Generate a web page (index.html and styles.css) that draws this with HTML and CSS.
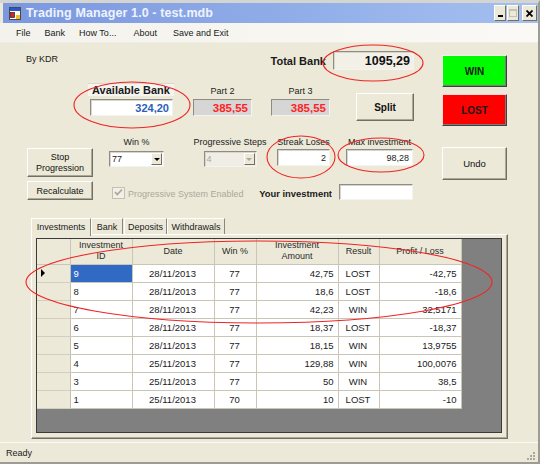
FILE: index.html
```html
<!DOCTYPE html>
<html>
<head>
<meta charset="utf-8">
<title>Trading Manager 1.0 - test.mdb</title>
<link rel="stylesheet" href="styles.css">
</head>
<body>
<div class="window">
  <div class="titlebar">
    <svg class="appicon" viewBox="0 0 12 13" width="12" height="13">
      <rect x="0.5" y="0.5" width="11" height="12" fill="#fff" stroke="#4a4a4a"/>
      <rect x="1" y="1" width="10" height="3" fill="#2858c8"/>
      <rect x="1.5" y="5.5" width="4" height="5" fill="#e02020" stroke="#222" stroke-width="0.7"/>
      <rect x="7" y="8" width="4" height="4" fill="#f4c020"/>
    </svg>
    <span class="title">Trading Manager 1.0 - test.mdb</span>
    <div class="capbtns">
      <span class="capbtn cap-min"><span class="minbar"></span></span>
      <span class="capbtn cap-max"><span class="maxbox"></span></span>
      <span class="capbtn cap-close">
        <svg viewBox="0 0 7 7" width="7" height="7"><path d="M0.5 0.5 L6.5 6.5 M6.5 0.5 L0.5 6.5" stroke="#000" stroke-width="1.8"/></svg>
      </span>
    </div>
  </div>
  <div class="menubar">
    <span class="mi">File</span>
    <span class="mi">Bank</span>
    <span class="mi">How To...</span>
    <span class="mi mi-about">About</span>
    <span class="mi mi-save">Save and Exit</span>
  </div>
  <div class="client">
    <div class="top">
      <div class="leftcol">
        <div class="row1">
          <span class="bykdr">By KDR</span>
          <div class="totalgrp">
            <span class="blabel">Total Bank</span>
            <div class="box total">1095,29</div>
          </div>
        </div>
        <div class="row2">
          <div class="availgrp">
            <div class="availlabel">Available Bank</div>
            <div class="box avail">324,20</div>
          </div>
          <div class="partgrp">
            <div class="partlabel">Part 2</div>
            <div class="box part">385,55</div>
          </div>
          <div class="partgrp">
            <div class="partlabel">Part 3</div>
            <div class="box part">385,55</div>
          </div>
          <div class="btn split">Split</div>
        </div>
        <div class="row3">
          <div class="btncol">
            <div class="btn stop">Stop<br>Progression</div>
            <div class="btn recalc">Recalculate</div>
          </div>
          <div class="settings">
            <div class="setline">
              <div class="fgrp g-win">
                <span class="flabel">Win %</span>
                <div class="combo">77<span class="dropbtn"><span class="arrow"></span></span></div>
              </div>
              <div class="fgrp g-steps">
                <span class="flabel">Progressive Steps</span>
                <div class="combo disabled">4<span class="dropbtn"><span class="arrow"></span></span></div>
              </div>
              <div class="fgrp g-streak">
                <span class="flabel">Streak Loses</span>
                <div class="box num">2</div>
              </div>
              <div class="fgrp g-max">
                <span class="flabel">Max investment</span>
                <div class="box num">98,28</div>
              </div>
            </div>
            <div class="invline">
              <span class="chk">
                <svg viewBox="0 0 11 11" width="11" height="11"><path d="M2 5 L4.3 7.5 L9 2.5" fill="none" stroke="#aca899" stroke-width="1.8"/></svg>
              </span>
              <span class="chklabel">Progressive System Enabled</span>
              <span class="yourlabel">Your investment</span>
              <div class="box your"></div>
            </div>
          </div>
        </div>
      </div>
      <div class="rightcol">
        <div class="bigbtn win">WIN</div>
        <div class="bigbtn lost">LOST</div>
        <div class="btn undo">Undo</div>
      </div>
    </div>

    <div class="tabctl">
      <div class="tabstrip">
        <span class="tab sel">Investments</span>
        <span class="tab t-bank">Bank</span>
        <span class="tab t-dep">Deposits</span>
        <span class="tab t-wd">Withdrawals</span>
      </div>
      <div class="tabpanel">
        <div class="grid">
          <table class="dg">
            <colgroup>
              <col class="c-rh"><col class="c-id"><col class="c-date"><col class="c-win"><col class="c-amt"><col class="c-res"><col class="c-pl">
            </colgroup>
            <thead>
              <tr>
                <th class="rh"></th>
                <th>Investment<br>ID</th>
                <th>Date</th>
                <th>Win %</th>
                <th>Investment<br>Amount</th>
                <th>Result</th>
                <th>Profit / Loss</th>
              </tr>
            </thead>
            <tbody>
              <tr><td class="rh"><span class="cur"></span></td><td class="l selcell">9</td><td class="c">28/11/2013</td><td class="c">77</td><td class="r">42,75</td><td class="c">LOST</td><td class="r">-42,75</td></tr>
              <tr><td class="rh"></td><td class="l">8</td><td class="c">28/11/2013</td><td class="c">77</td><td class="r">18,6</td><td class="c">LOST</td><td class="r">-18,6</td></tr>
              <tr><td class="rh"></td><td class="l">7</td><td class="c">28/11/2013</td><td class="c">77</td><td class="r">42,23</td><td class="c">WIN</td><td class="r">32,5171</td></tr>
              <tr><td class="rh"></td><td class="l">6</td><td class="c">28/11/2013</td><td class="c">77</td><td class="r">18,37</td><td class="c">LOST</td><td class="r">-18,37</td></tr>
              <tr><td class="rh"></td><td class="l">5</td><td class="c">28/11/2013</td><td class="c">77</td><td class="r">18,15</td><td class="c">WIN</td><td class="r">13,9755</td></tr>
              <tr><td class="rh"></td><td class="l">4</td><td class="c">25/11/2013</td><td class="c">77</td><td class="r">129,88</td><td class="c">WIN</td><td class="r">100,0076</td></tr>
              <tr><td class="rh"></td><td class="l">3</td><td class="c">25/11/2013</td><td class="c">77</td><td class="r">50</td><td class="c">WIN</td><td class="r">38,5</td></tr>
              <tr><td class="rh"></td><td class="l">1</td><td class="c">25/11/2013</td><td class="c">70</td><td class="r">10</td><td class="c">LOST</td><td class="r">-10</td></tr>
            </tbody>
          </table>
        </div>
      </div>
    </div>
  </div>
  <div class="statusbar">
    <span class="ready">Ready</span>
    <svg class="grip" viewBox="0 0 10 10" width="10" height="10">
      <g fill="#aca899">
        <rect x="7" y="1" width="2" height="2"/>
        <rect x="4" y="4" width="2" height="2"/><rect x="7" y="4" width="2" height="2"/>
        <rect x="1" y="7" width="2" height="2"/><rect x="4" y="7" width="2" height="2"/><rect x="7" y="7" width="2" height="2"/>
      </g>
    </svg>
  </div>

  <svg class="marks" viewBox="0 0 540 464" width="540" height="464">
    <g fill="none" stroke="#f02424" stroke-width="1.1">
      <ellipse cx="373" cy="63" rx="50" ry="18"/>
      <ellipse cx="132" cy="105" rx="58" ry="23"/>
      <ellipse cx="301" cy="157" rx="34" ry="21"/>
      <ellipse cx="381" cy="155" rx="43" ry="17"/>
      <ellipse cx="259" cy="282" rx="233" ry="41"/>
    </g>
  </svg>
</div>
</body>
</html>
```

FILE: styles.css
```css
* { box-sizing: border-box; }
html, body { margin: 0; padding: 0; }
body {
  width: 540px;
  height: 464px;
  overflow: hidden;
  font-family: "Liberation Sans", Arial, sans-serif;
  font-size: 9px;
  color: #1a1a1a;
  background: #ece9d8;
}

.window {
  position: relative;
  width: 540px;
  height: 464px;
  display: flex;
  flex-direction: column;
  background: #ece9d8;
  border-top: 3px solid #d4d4d0;
  border-right: 2px solid #9c9b94;
  border-bottom: 2px solid #9c9b94;
}

/* title bar */
.titlebar {
  height: 20px;
  margin-left: 3px;
  display: flex;
  align-items: center;
  background: linear-gradient(to right, #7b97df, #a4c0f0);
  color: #eef3fd;
  flex: none;
}
.appicon { margin-left: 6px; flex: none; }
.title { margin-left: 5px; font-weight: bold; font-size: 12.5px; letter-spacing: 0.1px; white-space: nowrap; }
.capbtns { margin-left: auto; margin-right: 1px; display: flex; align-items: center; }
.capbtn {
  height: 16px;
  width: 12px;
  background: #ece9d8;
  border: 1px solid;
  border-color: #fff #716f64 #716f64 #fff;
  display: flex;
  align-items: center;
  justify-content: center;
  position: relative;
}
.cap-max { margin-left: 1px; }
.cap-close { width: 15px; margin-left: 3px; }
.minbar { width: 5px; height: 2px; background: #000; margin-top: 6px; }
.maxbox { width: 8px; height: 8px; border: 1px solid #c4c2b8; border-top-width: 2px; }

/* menu */
.menubar {
  height: 20px;
  flex: none;
  display: flex;
  align-items: center;
  padding-left: 9px;
  background: linear-gradient(to right, #f3f2ec, #faf9f5);
  border-bottom: 1px solid #f0eee4;
}
.mi { padding: 0 7px; font-size: 9px; color: #1a1a1a; }
.mi-about { margin-left: 3px; }
.mi-save { margin-left: 2px; }

/* client */
.client { flex: 1; display: flex; flex-direction: column; overflow: hidden; }
.top { display: flex; padding-left: 26px; }
.leftcol { width: 388px; display: flex; flex-direction: column; }
.rightcol { width: 65px; margin-left: 28px; padding-top: 11px; display: flex; flex-direction: column; }

.row1 {
  margin-top: 8px;
  height: 19px;
  display: flex;
  justify-content: space-between;
  align-items: center;
}
.bykdr { align-self: flex-start; margin-top: 3px; line-height: 10px; }
.totalgrp { display: flex; align-items: center; }
.blabel { font-weight: bold; font-size: 11px; }

.box {
  display: flex;
  align-items: center;
  justify-content: flex-end;
  padding-right: 3px;
  background: #fff;
  border: 1px solid;
  border-color: #8e8c84 #f4f3ee #f4f3ee #8e8c84;
  box-shadow: inset 1px 1px 0 #d8d6cc;
}
.total {
  width: 81px;
  height: 19px;
  margin-left: 7px;
  background: #f2f0e7;
  font-weight: bold;
  font-size: 12.5px;
  color: #111;
}

.row2 { margin-top: 11px; display: flex; align-items: flex-start; }
.availgrp { width: 86px; margin-left: 62px; margin-top: 2px; display: flex; flex-direction: column; }
.availlabel {
  height: 13px;
  text-align: center;
  font-weight: bold;
  font-size: 11px;
  background: #f5f4ef;
  border-top: 1px solid #d9d7cd;
  line-height: 12px;
}
.avail {
  margin: 3px 1px 0 2px;
  height: 17px;
  color: #2b60b8;
  font-weight: bold;
  font-size: 11px;
}
.partgrp { width: 59px; margin-left: 19px; display: flex; flex-direction: column; }
.partlabel { margin-top: 4px; height: 12px; line-height: 12px; text-align: center; color: #222; }
.part {
  margin-top: 2px;
  height: 17px;
  background: #d6d6d6;
  color: #ff2424;
  font-weight: bold;
  font-size: 11.5px;
}

.btn {
  display: flex;
  align-items: center;
  justify-content: center;
  text-align: center;
  background: #ece9d8;
  border: 1px solid;
  border-color: #fff #716f64 #716f64 #fff;
  box-shadow: inset -1px -1px 0 #aca899;
  color: #111;
}
.split { width: 58px; height: 28px; margin-left: 26px; margin-top: 12px; font-weight: bold; font-size: 10px; }

.row3 { margin-top: 16px; display: flex; }
.btncol { width: 66px; margin-left: 1px; padding-top: 11px; display: flex; flex-direction: column; gap: 4px; }
.stop { height: 29px; line-height: 11px; }
.recalc { height: 19px; }
.settings { width: 304px; margin-left: 16px; display: flex; flex-direction: column; }
.setline { display: flex; align-items: flex-start; }
.fgrp { display: flex; flex-direction: column; align-items: center; }
.flabel { height: 10px; line-height: 10px; white-space: nowrap; color: #222; }
.g-win { width: 55px; }
.g-steps { width: 70px; margin-left: 31px; }
.g-streak { width: 53px; margin-left: 12px; }
.g-max { width: 67px; margin-left: 16px; }
.g-win .combo { width: 55px; }
.g-steps .combo { width: 53px; }
.num { width: 100%; height: 17px; margin-top: 2px; }

.combo {
  position: relative;
  margin-top: 4px;
  height: 16px;
  display: flex;
  align-items: center;
  padding-left: 2px;
  background: #fff;
  border: 1px solid;
  border-color: #8e8c84 #f4f3ee #f4f3ee #8e8c84;
  box-shadow: inset 1px 1px 0 #d8d6cc;
}
.dropbtn {
  position: absolute;
  right: 1px;
  top: 1px;
  width: 11px;
  height: 12px;
  background: #ece9d8;
  border: 1px solid;
  border-color: #fff #716f64 #716f64 #fff;
  display: flex;
  align-items: center;
  justify-content: center;
}
.arrow {
  width: 0;
  height: 0;
  border-left: 3px solid transparent;
  border-right: 3px solid transparent;
  border-top: 3px solid #000;
}
.combo.disabled { background: #efede5; color: #aca899; }
.combo.disabled .arrow { border-top-color: #aca899; }

.invline { margin-top: 17px; height: 16px; display: flex; align-items: center; }
.chk {
  width: 13px;
  height: 12px;
  margin-left: 3px;
  border: 1px solid #c4c1b2;
  background: #f1efe7;
  display: flex;
  align-items: center;
  justify-content: center;
  margin-top: 1px;
}
.chklabel { margin-left: 3px; color: #aca899; margin-top: 3px; }
.yourlabel { margin-left: auto; font-weight: bold; font-size: 9.4px; margin-top: 3px; }
.your { width: 74px; height: 16px; margin-left: 7px; }

.bigbtn {
  height: 32px;
  display: flex;
  align-items: center;
  justify-content: center;
  font-weight: bold;
  font-size: 10px;
  color: #1a1a1a;
  border: 1px solid;
  border-color: #e8ffe8 #404040 #404040 #e8ffe8;
  box-shadow: inset -1px -1px 0 #7a7a7a;
}
.win { background: #00fa00; margin-top: 1px; }
.lost { background: #ff0000; margin-top: 7px; border-color: #ffd8d8 #404040 #404040 #ffd8d8; }
.undo { height: 33px; margin-top: 21px; font-size: 9.5px; }

/* tabs */
.tabctl { margin-top: 17px; margin-left: 31px; width: 477px; display: flex; flex-direction: column; }
.tabstrip { height: 18px; display: flex; align-items: flex-end; position: relative; z-index: 1; }
.tab {
  height: 16px;
  display: flex;
  align-items: center;
  justify-content: center;
  background: #ece9d8;
  border: 1px solid;
  border-bottom: none;
  border-color: #fff #8a887e #fff #fff;
  color: #1a1a1a;
  margin-bottom: 1px;
}
.tab.sel { height: 18px; width: 60px; margin-bottom: -1px; padding-bottom: 2px; }
.t-bank { width: 32px; }
.t-dep { width: 43px; margin-left: 1px; }
.t-wd { width: 58px; }

.tabpanel {
  height: 205px;
  margin-top: -1px;
  padding: 3px 5px 5px 4px;
  background: #ece9d8;
  border: 1px solid;
  border-color: #fff #716f64 #716f64 #fff;
  box-shadow: inset -1px -1px 0 #aca899;
}
.grid {
  width: 466px;
  height: 195px;
  background: #808080;
  border: 1px solid #3a3a3a;
  overflow: hidden;
}

.dg {
  border-collapse: collapse;
  table-layout: fixed;
  width: 424px;
  font-size: 9.5px;
}
.c-rh { width: 33px; }
.c-id { width: 62px; }
.c-date { width: 82px; }
.c-win { width: 42px; }
.c-amt { width: 82px; }
.c-res { width: 41px; }
.c-pl { width: 82px; }

.dg th {
  height: 25px;
  padding: 0;
  background: #ece9d8;
  font-weight: normal;
  font-size: 9px;
  line-height: 11px;
  color: #2a2a2a;
  text-align: center;
  border-right: 1px solid #c9c6b7;
  border-bottom: 1px solid #c9c6b7;
}
.dg td {
  height: 18px;
  padding: 0 4px 0 3px;
  background: #fff;
  border-right: 1px solid #c9c6b7;
  border-bottom: 1px solid #c9c6b7;
  white-space: nowrap;
  color: #1a1a1a;
}
.dg td.rh {
  background: #ece9d8;
  border-bottom: 1px solid #d2cfc1;
  border-right: 1px solid #c2bfb0;
  padding: 0 0 0 4px;
}
.dg .l { text-align: left; }
.dg .c { text-align: center; }
.dg .r { text-align: right; }
.dg td.selcell { background: #316ac5; color: #fff; }
.cur {
  display: block;
  width: 0;
  height: 0;
  border-left: 4px solid #000;
  border-top: 4px solid transparent;
  border-bottom: 4px solid transparent;
}

/* status bar */
.statusbar {
  height: 20px;
  flex: none;
  display: flex;
  align-items: center;
  padding-left: 6px;
  border-top: 1px solid #fbfaf6;
  background: #ece9d8;
}
.ready { font-size: 9px; }
.grip { margin-left: auto; margin-right: 2px; margin-top: 6px; }

/* annotation overlay */
.marks {
  position: absolute;
  left: 0;
  top: -3px;
  pointer-events: none;
}
```
